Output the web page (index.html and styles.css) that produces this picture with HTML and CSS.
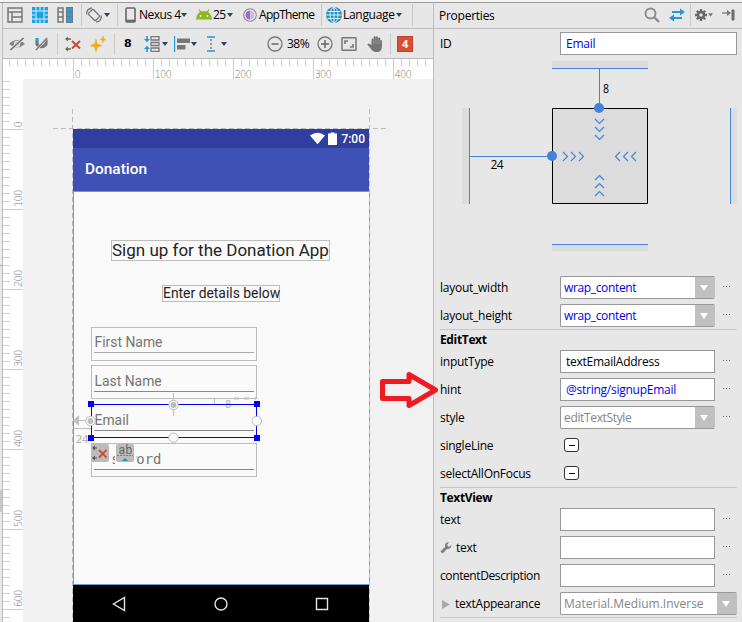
FILE: index.html
```html
<!DOCTYPE html>
<html lang="en">
<head>
<meta charset="utf-8">
<title>Layout Editor</title>
<link rel="stylesheet" href="styles.css">
</head>
<body>
<svg class="defs" width="0" height="0">
  <symbol id="caret" viewBox="0 0 6 4"><path d="M0 0H6L3 4Z" fill="#33415c"/></symbol>
</svg>
<div class="app">
  <div class="edge"><i class="edge-tab"></i><i class="edge-tab low"></i></div>
  <main class="editor">
    <div class="toolbar first">
      <svg class="ic m4" viewBox="0 0 16 16"><path d="M1 1H15V15H1ZM1 5H15M5 5V15M5 10H15" fill="none" stroke="#777" stroke-width="1.5"/></svg>
      <svg class="ic m9" viewBox="0 0 16 16"><path d="M0 0H16V16H0Z" fill="#1ea1e5"/><path d="M4 0V16M12 0V16M0 4H16M0 12H16" stroke="#d8f2ff"/><path d="M8 0V3M8 13V16M0 8H3M13 8H16" stroke="#d8f2ff"/></svg>
      <svg class="ic m9" viewBox="0 0 16 16"><path d="M1 1H6V15H1ZM1 5H6M1 10H6" fill="none" stroke="#777" stroke-width="1.5"/><path d="M9 0H16V16H9Z" fill="#777"/><path d="M10 1H15V15H10Z" fill="#1ea1e5"/><path d="M9 5H16M9 10H16" stroke="#777"/></svg>
      <i class="sep m8"></i>
      <svg class="ic m4" viewBox="0 0 16 16"><g fill="none" stroke="#6f6f6f" stroke-width="1.2"><rect x="4.600" y="3" width="6.800" height="10" rx="1" transform="rotate(-45 8 8)"/><path d="M.8 7.500Q0 2 6 .8M15.200 8.500Q16 14 10 15.200"/></g></svg>
      <svg class="caret m2"><use href="#caret"/></svg>
      <i class="sep m7"></i>
      <svg class="phone m7" viewBox="0 0 11 16"><rect x="1" y="1" width="9" height="14" rx="1" fill="none" stroke="#666" stroke-width="1.6"/><path d="M1 13.7H10" stroke="#666" stroke-width="2"/></svg>
      <span class="lbl nexus">Nexus 4</span>
      <svg class="caret"><use href="#caret"/></svg>
      <svg class="ic m9" viewBox="0 0 16 16"><path d="M0 12.500Q.8 4 8 4Q15.200 4 16 12.500Z" fill="#8fb522"/><path d="M3 2.500L5 5.500M13 2.500L11 5.500" stroke="#8fb522" stroke-width="1.300"/><circle cx="4.600" cy="9" r="1" fill="#eee"/><circle cx="11.400" cy="9" r="1" fill="#eee"/></svg>
      <span class="lbl api">25</span>
      <svg class="caret m1"><use href="#caret"/></svg>
      <svg class="theme" viewBox="0 0 14 14"><circle cx="7" cy="7" r="6.300" fill="#efe9f5" stroke="#8f829a" stroke-width="1.100"/><path d="M7 2.500A4.500 4.500 0 0 1 7 11.500Z" fill="#cdbfdc"/><path d="M7 2.500A4.500 4.500 0 0 0 7 11.500Z" fill="#9a70bd"/></svg>
      <span class="lbl theme-name">AppTheme</span>
      <i class="sep m7"></i>
      <svg class="ic m4" viewBox="0 0 16 16"><circle cx="8" cy="8" r="8" fill="#208fc4"/><g fill="none" stroke="#dff2fb"><ellipse cx="8" cy="8" rx="4" ry="7.500"/><path d="M8 0V16M0 8H16M1.500 4.500H14.500M1.500 11.500H14.500"/></g></svg>
      <span class="lbl lang">Language</span>
      <svg class="caret"><use href="#caret"/></svg>
      <i class="sep m10"></i>
    </div>
    <div class="toolbar second">
      <svg class="ic m6" viewBox="0 0 16 16"><path d="M0 8Q8 0 16 8Q8 15 0 8Z" fill="#858585"/><circle cx="8" cy="8" r="3.200" fill="#e7e7e7"/><circle cx="8" cy="8" r="1.800" fill="#858585"/><path d="M1.500 14L14.500 2" stroke="#e7e7e7" stroke-width="3"/><path d="M1.500 14L14.500 2" stroke="#6f6f6f" stroke-width="1.500"/></svg>
      <svg class="ic m9" viewBox="0 0 16 16"><path d="M3 5V8A5 4.500 0 0 0 12 8V3" fill="none" stroke="#777" stroke-width="3.200"/><path d="M1.400 2H4.600V5H1.400Z" fill="#1ea1e5"/><path d="M2 14L13 2" stroke="#e7e7e7" stroke-width="2.400"/><path d="M2 14L13 2" stroke="#777" stroke-width="1.300"/></svg>
      <i class="sep m7"></i>
      <svg class="ic m7" viewBox="0 0 16 16"><path d="M0 3L3 .5V5.500ZM0 13L3 10.500V15.500Z" fill="#666"/><path d="M3 3H6M3 13H6" stroke="#666" stroke-width="1.300"/><path d="M7 5L15 12.500M15 5L7 12.500" stroke="#c9463a" stroke-width="2"/></svg>
      <svg class="ic m9" viewBox="0 0 16 16"><path d="M6 3L7.500 8L12 9.500L7.500 11L6 16L4.500 11L0 9.500L4.500 8ZM13 0L13.800 2.700L16 3.500L13.800 4.300L13 7L12.200 4.300L10 3.500L12.200 2.700Z" fill="#efb112" stroke="#efb112" stroke-width=".5"/></svg>
      <i class="sep m8"></i>
      <span class="margin-value">8</span>
      <svg class="ic m12" viewBox="0 0 16 16"><path d="M7 .7H15V4H7ZM7 6.500H15V9.500H7ZM7 12H15V15.300H7Z" fill="none" stroke="#777" stroke-width="1.300"/><path d="M3 0V4M3 16V12" stroke="#1e8fcb" stroke-width="1.500"/><path d="M0 3H6L3 6.300ZM0 13H6L3 9.700Z" fill="#1e9bd7"/></svg>
      <svg class="caret m2"><use href="#caret"/></svg>
      <svg class="ic m6" viewBox="0 0 16 16"><path d="M.5 0V16" stroke="#1e9bd7" stroke-width="1.300"/><path d="M3 2.500H16V7H3ZM3 9H11.500V13.500H3Z" fill="#777"/></svg>
      <svg class="caret m1"><use href="#caret"/></svg>
      <svg class="spacing" viewBox="0 0 8 16"><path d="M0 1H8M0 15H8" stroke="#1e9bd7" stroke-width="1.500"/><path d="M4 3V5M4 7V9M4 11V13" stroke="#777" stroke-width="1.500"/></svg>
      <svg class="caret m6"><use href="#caret"/></svg>
      <svg class="ic zoom-out" viewBox="0 0 16 16"><circle cx="8" cy="8" r="7" fill="none" stroke="#777" stroke-width="1.300"/><path d="M4.500 8H11.500" stroke="#666" stroke-width="1.500"/></svg>
      <span class="lbl percent">38%</span>
      <svg class="ic m6" viewBox="0 0 16 16"><circle cx="8" cy="8" r="7" fill="none" stroke="#777" stroke-width="1.300"/><path d="M4 8H12M8 4V12" stroke="#666" stroke-width="1.500"/></svg>
      <svg class="ic m8" viewBox="0 0 16 16"><rect x="1" y="1.800" width="14" height="12.500" rx=".5" fill="none" stroke="#777" stroke-width="1.500"/><path d="M4 8V5H7M9 11H12V8" fill="none" stroke="#777" stroke-width="1.600"/></svg>
      <svg class="ic m10" viewBox="0 0 16 16"><path d="M4.500 9V3.200Q5.600 2 6.600 3.200V1Q7.700-.3 8.800 1V.8Q9.900-.4 11 .9V2Q12.200.9 13.300 2.200V4.300Q14.300 3.500 15 4.500V11Q14.500 16 10 16H8Q6 16 4 13L.3 8.500Q1.200 6.900 2.800 8Z" fill="#747474"/><path d="M6.700 3V8M8.900 1V8M11.100 2V8M13.200 4V8" stroke="#bbb" stroke-width=".4"/></svg>
      <i class="sep m7"></i>
      <span class="badge">4</span>
    </div>
    <div class="surface">
      <svg class="ruler-top" width="430" height="20">
        <defs>
          <pattern id="tx" x="6" width="8" height="7" patternUnits="userSpaceOnUse"><path d="M0 0H1V7H0Z" fill="#d2d2d2"/></pattern>
          <pattern id="mx" x="70" width="80" height="20" patternUnits="userSpaceOnUse"><path d="M0 0H1V20H0Z" fill="#cfcfcf"/></pattern>
        </defs>
        <path d="M6 0H430V7H6Z" fill="url(#tx)"/><path d="M70 0H430V20H70Z" fill="url(#mx)"/>
        <text x="71.500" y="19">0</text><text x="151.500" y="19">100</text><text x="231.500" y="19">200</text><text x="311.500" y="19">300</text><text x="391.500" y="19">400</text>
      </svg>
      <svg class="ruler-left" width="20" height="543">
        <defs>
          <pattern id="ty" y="2" width="7" height="8" patternUnits="userSpaceOnUse"><path d="M0 0H7V1H0Z" fill="#d2d2d2"/></pattern>
          <pattern id="my" y="50" width="20" height="80" patternUnits="userSpaceOnUse"><path d="M0 0H20V1H0Z" fill="#cfcfcf"/></pattern>
        </defs>
        <path d="M0 0H7V543H0Z" fill="url(#ty)"/><path d="M0 50H20V543H0Z" fill="url(#my)"/>
        <g transform="rotate(-90)"><text x="-48.500" y="19">0</text><text x="-128" y="19">100</text><text x="-208" y="19">200</text><text x="-288" y="19">300</text><text x="-368" y="19">400</text><text x="-448" y="19">500</text><text x="-528" y="19">600</text></g>
      </svg>
      <div class="canvas">
        <div class="device">
          <div class="status-bar">
            <svg width="29" height="14" viewBox="0 0 29 14"><path d="M0 3.500Q7.500-2 15 3.500L7.500 12.300Z" fill="#fff"/><path d="M18 1.500H20.500V.5H24.500V1.500H27V13H18Z" fill="#fff"/></svg>
            <span>7:00</span>
          </div>
          <div class="app-bar">Donation</div>
          <div class="content">
            <div class="node title">Sign up for the Donation App</div>
            <div class="node subtitle">Enter details below</div>
            <div class="node field first-name"><span>First Name</span></div>
            <div class="node field last-name"><span>Last Name</span></div>
            <div class="node field email"><span>Email</span></div>
            <div class="node field password"><span>Password</span></div>
          </div>
          <div class="nav-bar">
            <svg width="14" height="16" viewBox="0 0 14 16"><path d="M12.500 1.500V14.500L1.500 8Z" fill="none" stroke="#e4e4e4" stroke-width="1.400"/></svg>
            <svg width="14" height="14" viewBox="0 0 14 14"><circle cx="7" cy="7" r="6" fill="none" stroke="#e4e4e4" stroke-width="1.400"/></svg>
            <svg width="14" height="14" viewBox="0 0 14 14"><path d="M1.500 1.500H12.500V12.500H1.500Z" fill="none" stroke="#e4e4e4" stroke-width="1.400"/></svg>
          </div>
        </div>
        <svg class="overlay" width="416" height="543" viewBox="23 79 416 543">
          <g fill="none" stroke="#bcbcbc" stroke-dasharray="5 3"><path d="M53 128.500H386M72.500 109V622M369.500 109V622"/></g>
          <path d="M369.500 191V584" stroke="#bdb8b4"/><path d="M369.500 194V584" stroke="#67a2dc" stroke-dasharray="3 5"/>
          <g fill="none" stroke="#c0c0c0"><path d="M173.500 393V416M214.500 399V404M74 420.500H91M74 428.500H91"/><path d="M234 398.500H256" stroke-dasharray="5 5" stroke-width="2"/></g>
          <path d="M73 420.500L79 415V426Z" fill="#c0c0c0"/>
          <text class="dim" x="225" y="408">8</text><text class="dim big" x="75.500" y="443">24</text>
          <path d="M91.500 404.500H256.500V437.500H91.500Z" fill="none" stroke="#00f"/>
          <path d="M88 401H94V407H88ZM254 401H260V407H254ZM88 435H94V441H88ZM254 435H260V441H254Z" fill="#00f"/>
          <g fill="#fafafa" stroke="#bdbdbd"><circle cx="173.500" cy="405" r="4.700"/><circle cx="173.500" cy="437.700" r="4.700"/><circle cx="90.500" cy="421" r="4.700"/><circle cx="256.800" cy="421" r="4.700"/></g>
          <g fill="#bdbdbd"><circle cx="173.500" cy="405" r="2.900"/><circle cx="90.500" cy="421" r="2.900"/></g>
          <path d="M92 444H112V465.500H92ZM115 444H136V465.500H115Z" fill="#fafafa"/>
          <rect x="91" y="444" width="18" height="18" rx="2" fill="#bcbcbc"/><rect x="116" y="444" width="18" height="18" rx="2" fill="#bcbcbc"/>
          <path d="M92 448L95 445.500V450.500ZM92 458L95 455.500V460.500Z" fill="#555"/><path d="M94 448H97M94 458H97" stroke="#555"/><path d="M99 450L106.500 457.500M106.500 450L99 457.500" stroke="#c4503f" stroke-width="1.900"/>
          <text class="ab" x="118.500" y="454" textLength="13">ab</text><path d="M117 455.500H133" stroke="#1e9bd7" stroke-dasharray="2 1"/><path d="M122 461L125 458L128 461Z" fill="#1e8fcb"/>
          <path d="M382.500 381.500H409V374.500L435.500 390L409 405.500V398.500H382.500Z" fill="none" stroke="#ed1c24" stroke-width="5" stroke-linejoin="round"/>
        </svg>
      </div>
    </div>
  </main>
  <aside class="properties">
    <header class="head">
      <span class="head-title">Properties</span>
      <svg class="ic" viewBox="0 0 16 16"><circle cx="6.500" cy="6.500" r="5" fill="none" stroke="#8b8b8b" stroke-width="1.900"/><path d="M10 10L15 15" stroke="#8b8b8b" stroke-width="2.400"/></svg>
      <svg class="ic m9" viewBox="0 0 16 16"><path d="M3 5H12M4 11H13" stroke="#2399d1" stroke-width="1.800"/><path d="M11 1.500L16 5L11 8.500ZM5 7.500L0 11L5 14.500Z" fill="#2399d1"/></svg>
      <i class="sep m5"></i>
      <svg class="gear" viewBox="0 0 14 14"><g stroke="#686868" stroke-width="2.300"><path d="M7 1V13M1 7H13M2.800 2.800L11.200 11.200M11.200 2.800L2.800 11.200"/></g><circle cx="7" cy="7" r="4.200" fill="#686868"/><circle cx="7" cy="7" r="1.700" fill="#e7e7e7"/></svg>
      <svg class="caret small" viewBox="0 0 6 4"><path d="M0 0H6L3 4Z" fill="#777"/></svg>
      <svg class="pin" viewBox="0 0 13 12"><path d="M0 4H6" stroke="#777" stroke-width="1.300"/><path d="M5 1L9 4L5 7Z" fill="#777"/><path d="M10 1H12V11H10Z" fill="#777" stroke="#666"/></svg>
    </header>
    <div class="row id-row"><label>ID</label><div class="box full val">Email</div></div>
    <svg class="inspector" width="308" height="217" viewBox="434 57 308 217">
      <g fill="#dcdcdc"><path d="M552 61H648V68H552ZM552 245H648V251H552ZM462 108H469V204H462ZM731 108H737V204H731Z"/></g>
      <path d="M552.500 108.500H647.500V203.500H552.500Z" fill="#dcdcdc" stroke="#000"/>
      <g fill="none" stroke="#4383dc"><path d="M552 68.500H648M552 244.500H648M469.500 108V204M730.500 108V204M599.500 69V108M470 156.500H552"/>
      <path stroke-width="1.200" d="M595 119L599.500 123.500L604 119M595 127L599.500 131.500L604 127M595 135L599.500 139.500L604 135M595 180L599.500 175.500L604 180M595 188L599.500 183.500L604 188M595 196L599.500 191.500L604 196M563 152L567.500 156.500L563 161M571 152L575.500 156.500L571 161M579 152L583.500 156.500L579 161M620 152L615.500 156.500L620 161M628 152L623.500 156.500L628 161M636 152L631.500 156.500L636 161"/></g>
      <circle cx="599" cy="108" r="5" fill="#4383dc"/><circle cx="552" cy="156" r="5" fill="#4383dc"/>
      <text x="603" y="93" textLength="6" lengthAdjust="spacingAndGlyphs">8</text><text x="490.500" y="169" textLength="13">24</text>
    </svg>
    <div class="row"><label>layout_width</label><div class="box combo val"><span>wrap_content</span><i></i></div><b class="more"></b></div>
    <div class="row"><label>layout_height</label><div class="box combo val"><span>wrap_content</span><i></i></div><b class="more"></b></div>
    <section>
      <h2>EditText</h2>
      <div class="row"><label>inputType</label><div class="box">textEmailAddress</div><b class="more"></b></div>
      <div class="row"><label>hint</label><div class="box val">@string/signupEmail</div><b class="more"></b></div>
      <div class="row"><label>style</label><div class="box combo dimmed"><span>editTextStyle</span><i></i></div><b class="more"></b></div>
      <div class="row"><label>singleLine</label><div class="check"></div></div>
      <div class="row"><label>selectAllOnFocus</label><div class="check"></div></div>
    </section>
    <section>
      <h2>TextView</h2>
      <div class="row"><label>text</label><div class="box"></div><b class="more"></b></div>
      <div class="row"><label class="tool"><svg width="12" height="12" viewBox="0 0 12 12"><path d="M1.500 10.500L7 5" stroke="#808080" stroke-width="2.800"/><path d="M11.500 3L9 5L7 3L9 .3Q5.500 0 5 3Q4.600 6.500 8 7Q11.500 6.500 11.500 3Z" fill="#808080"/></svg>text</label><div class="box"></div><b class="more"></b></div>
      <div class="row"><label class="long">contentDescription</label><div class="box"></div><b class="more"></b></div>
      <div class="row"><label class="tree"><svg width="8" height="9" viewBox="0 0 8 9"><path d="M0 0L8 4.500L0 9Z" fill="#a9a9a9"/></svg>textAppearance</label><div class="box combo full dimmed"><span class="wide">Material.Medium.Inverse</span><i></i></div></div>
    </section>
    <section></section>
  </aside>
</div>
</body>
</html>
```
FILE: styles.css
```css
* { box-sizing: border-box; }
body { margin: 0; width: 742px; height: 622px; overflow: hidden; background: #e7e7e7; color: #000; font: 12px/16px "Open Sans", "Noto Sans", sans-serif; letter-spacing: -0.25px; }
svg { display: block; flex: none; }
.defs { position: absolute; }
.app { display: grid; grid-template-columns: 3px 430px 309px; height: 622px; padding-top: 2px; background: linear-gradient(#f4f4f4 2px, #999 2px, #999 3px, #e7e7e7 3px); }
.edge { border-right: 1px solid #bcbcbc; padding-top: 160px; margin-top: 1px; }
.edge-tab { display: block; height: 103px; border-bottom: 1px solid #aaa; background: #ececec; }
.edge-tab.low { height: 22px; margin-top: 224px; background: #c8c8c8; border: 0; }
.editor { position: relative; z-index: 1; display: flex; flex-direction: column; height: 620px; padding-top: 1px; }
.toolbar { display: flex; align-items: center; flex: none; background: #e7e7e7; border-bottom: 1px solid #bdbdbd; }
.first { height: 26px; padding-bottom: 1px; }
.second { height: 30px; }
.ic { width: 16px; height: 16px; }
.sep { width: 1px; height: 22px; flex: none; background: #c9c9c9; }
.m1 { margin-left: 1px; }
.m2 { margin-left: 2px; }
.m4 { margin-left: 4px; }
.m5 { margin-left: 5px; }
.m6 { margin-left: 6px; }
.m7 { margin-left: 7px; }
.m8 { margin-left: 8px; }
.m9 { margin-left: 9px; }
.m10 { margin-left: 10px; }
.m12 { margin-left: 12px; }
.caret { width: 6px; height: 4px; }
.lbl { flex: none; white-space: nowrap; }
.phone { width: 11px; height: 16px; }
.nexus { width: 42px; margin-left: 3px; letter-spacing: -0.500px; }
.api { width: 13px; margin-left: 1px; letter-spacing: -0.500px; }
.theme { width: 14px; height: 14px; margin-left: 10px; }
.theme-name { width: 55px; margin-left: 2px; letter-spacing: -0.700px; }
.lang { width: 53px; margin-left: 1px; letter-spacing: -0.300px; }
.margin-value { width: 8px; margin-left: 9px; font: bold 11px/16px "DejaVu Sans", sans-serif; }
.spacing { width: 8px; height: 16px; margin-left: 10px; }
.zoom-out { margin-left: 40px; }
.percent { width: 24px; margin-left: 4px; letter-spacing: -0.500px; }
.badge { width: 16px; height: 16px; margin-left: 6px; border: 1px solid #c7402b; background: #dc4d36; color: #fff; font-weight: bold; font-size: 11px; line-height: 14px; text-align: center; }
.surface { display: grid; grid-template: 20px 543px / 20px 410px; background: #fff; }
.ruler-top { grid-column: 1 / 3; }
.surface text { font: 10px "DejaVu Sans", sans-serif; font-weight: 200; fill: #777; letter-spacing: -0.800px; }
.canvas { position: relative; background: #f1f1f1; }
.device { position: absolute; left: 50px; top: 50px; width: 296px; font-family: Roboto, sans-serif; letter-spacing: 0; }
.status-bar { display: flex; align-items: center; justify-content: flex-end; gap: 2px; height: 19px; padding: 1px 4px 0 0; background: #303f9f; color: #fff; font-size: 12px; font-weight: 500; }
.app-bar { height: 43px; padding-left: 12px; background: #3f51b5; color: #fff; font-size: 15.400px; line-height: 43px; font-weight: 500; }
.content { position: relative; height: 394px; background: #fafafa; border: 1px solid #5f9fd6; border-right: 0; }
.node { position: absolute; border: 1px solid #bdbdbd; white-space: nowrap; color: #242424; }
.title { left: 37px; top: 48px; width: 219px; height: 21px; font-size: 17px; line-height: 19px; }
.subtitle { left: 88px; top: 93px; width: 118px; height: 17px; font-size: 13.900px; line-height: 15px; }
.field { left: 17px; width: 166px; height: 34px; padding: 7px 2px 0 2px; color: #757575; font-size: 13.900px; line-height: 14px; text-indent: 0.500px; }
.field span { display: block; height: 18px; border-bottom: 1px solid #888; }
.first-name { top: 135px; }
.first-name span { border-color: #aaa; }
.last-name { top: 173px; padding-top: 8px; }
.email { top: 212px; padding-top: 8px; }
.password { top: 251px; font-family: "DejaVu Sans Mono", monospace; padding-top: 8px; }
.nav-bar { display: flex; justify-content: space-between; align-items: center; height: 37px; padding: 0 40px 0 39px; background: #000; }
.overlay { position: absolute; left: 0; top: 0; }
.surface .dim { fill: #b4b4b4; font-weight: 400; letter-spacing: 0; }
.surface .big { font-size: 11px; letter-spacing: -0.700px; }
.surface .ab { font: 12px Roboto, sans-serif; fill: #666; }
.properties { border-left: 1px solid #bdbdbd; padding-top: 1px; }
.head { display: flex; align-items: center; height: 26px; padding-bottom: 1px; border-bottom: 1px solid #bdbdbd; }
.head-title { width: 205px; padding: 1px 0 0 5px; }
.head .ic:first-of-type { margin-left: 5px; }
.gear { width: 14px; height: 14px; margin-left: 3px; }
.small { margin-left: 0; width: 5px; }
.pin { width: 13px; height: 12px; margin-left: 9px; }
.row { display: flex; align-items: center; height: 28px; }
.row label { width: 120px; margin-left: 6px; flex: none; }
.row .long { letter-spacing: -0.400px; }
.id-row { padding-top: 1px; }
.box { width: 155px; height: 23px; margin-top: -1px; flex: none; padding-left: 5px; border: 1px solid #989898; background: #fff; line-height: 21px; white-space: nowrap; }
.full { width: 177px; }
.val { color: #0000f0; }
.combo { display: flex; padding-left: 3px; border-radius: 2px; border-right-color: #c0c0c0; }
.combo span { flex: 1; letter-spacing: -0.350px; }
.combo i { width: 19px; background: #c0c0c0; }
.combo i::before { content: ""; display: block; width: 0; height: 0; margin: 8px 0 0 5px; border: 4px solid transparent; border-top: 6px solid #fff; border-bottom: 0; }
.dimmed { color: #858585; }
.combo .wide { letter-spacing: 0; }
.more { width: 7px; height: 1px; margin: -4px 0 0 8px; background: repeating-linear-gradient(90deg, #666 0 1px, transparent 1px 3px); }
.check { width: 15px; height: 14px; margin: -2px 0 0 4px; border: 1px solid #333; border-radius: 3px; background: #fff; padding: 6px 4px; }
.check::before { content: ""; display: block; width: 6px; height: 1px; background: #000; }
section { position: relative; margin-top: -1px; }
section::before { content: ""; display: block; height: 1px; width: 297px; margin-left: 6px; background: #c6c6c6; }
h2 { margin: 0 0 0 6px; height: 18px; font-size: 12px; line-height: 20px; letter-spacing: -0.350px; }
.tool, .tree { display: flex; align-items: center; gap: 4px; }
.tree { gap: 5px; padding-left: 2px; }
.inspector text { font: 12px "Open Sans", sans-serif; letter-spacing: 0; }
```
